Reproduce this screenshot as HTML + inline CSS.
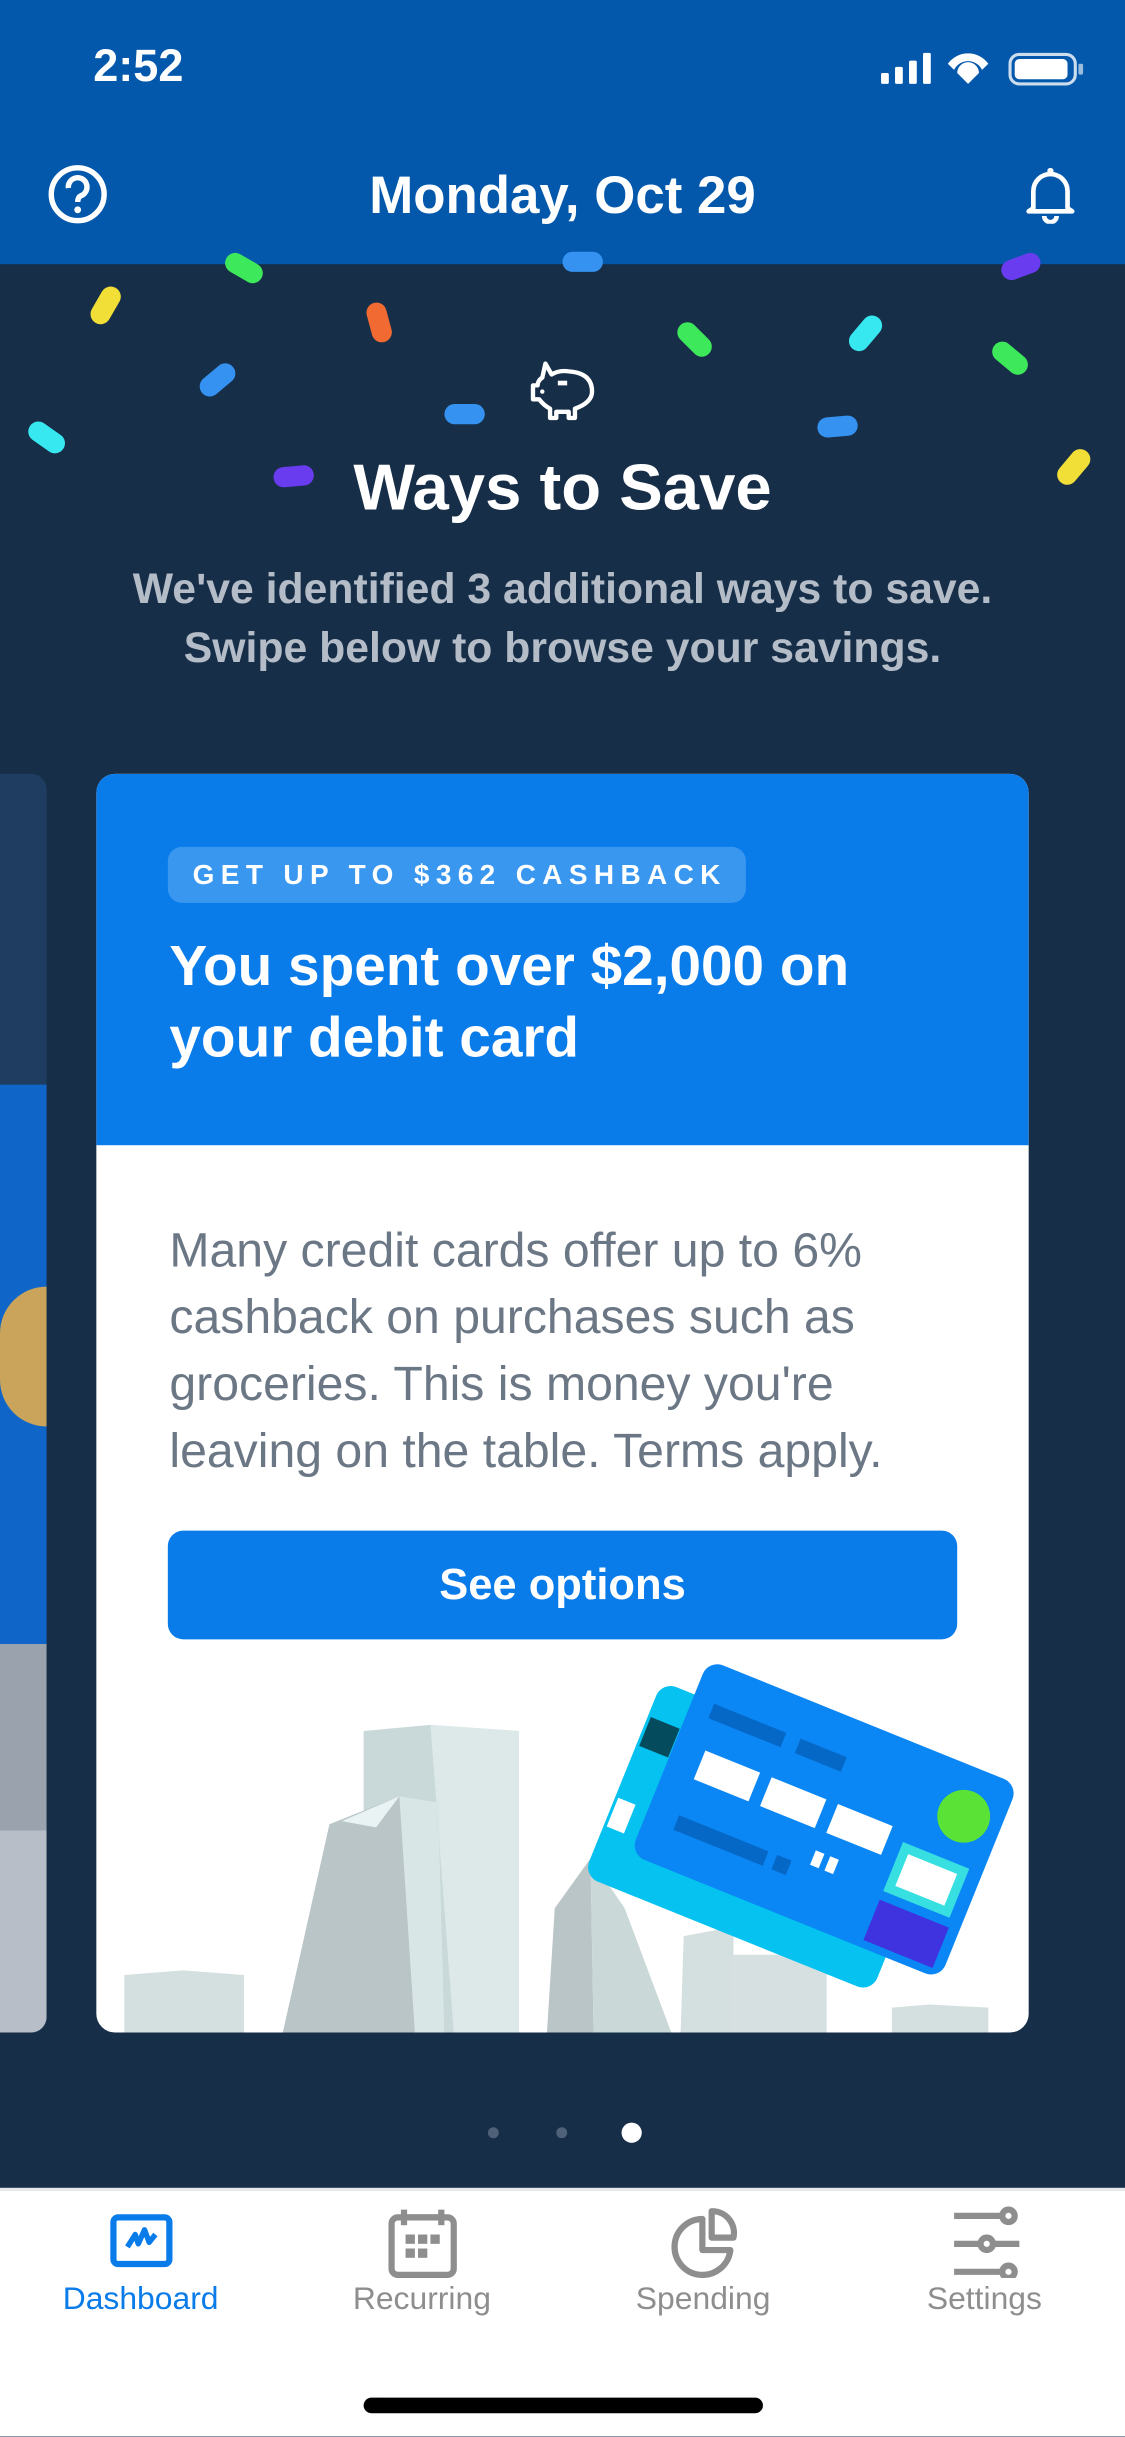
<!DOCTYPE html>
<html><head><meta charset="utf-8"><style>
*{margin:0;padding:0;box-sizing:border-box}
html,body{width:1125px;height:2436px;overflow:hidden;background:#172e48}
#w{position:absolute;left:0;top:0;width:724px;height:1568px;transform:scale(1.5539);transform-origin:0 0;font-family:"Liberation Sans",Arial,sans-serif;background:#172e48;overflow:hidden}
.a{position:absolute}
.c{position:absolute;width:26px;height:13px;border-radius:7px}
</style></head><body><div id="w">
<div class="a" style="left:0;top:0;width:724px;height:170px;background:#0458ab"></div>
<div class="a" style="left:60px;top:27px;color:#fff;font-size:29px;font-weight:bold">2:52</div>
<svg class="a" style="left:566px;top:32px" width="132" height="26" viewBox="0 0 132 26">
<rect x="1" y="15" width="5" height="7" rx="1" fill="#fff"/><rect x="10" y="11" width="5" height="11" rx="1" fill="#fff"/><rect x="19" y="7" width="5" height="15" rx="1" fill="#fff"/><rect x="28" y="2" width="5" height="20" rx="1" fill="#fff"/>
<path d="M44 9 A16 16 0 0 1 70 9 L66 13 A10 10 0 0 0 48 13Z M50 15 A7 7 0 0 1 64 15 L57 22Z" fill="#fff"/>
<rect x="84" y="3" width="42" height="19" rx="6" fill="none" stroke="#fff" stroke-width="2" opacity=".8"/><rect x="87" y="6" width="34" height="13" rx="3" fill="#fff"/><rect x="128" y="9" width="3" height="7" rx="1" fill="#fff" opacity=".6"/>
</svg>
<svg class="a" style="left:30px;top:105px" width="40" height="40" viewBox="0 0 40 40"><circle cx="20" cy="20" r="17" fill="none" stroke="#fff" stroke-width="3.5"/><path d="M14 16 A6 6 0 1 1 22 21 Q20 22 20 25" fill="none" stroke="#fff" stroke-width="3.5"/><circle cx="20" cy="30" r="2.2" fill="#fff"/></svg>
<div class="a" style="left:0;width:724px;top:107px;text-align:center;color:#fff;font-size:34px;font-weight:bold">Monday, Oct 29</div>
<svg class="a" style="left:656px;top:104px" width="40" height="40" viewBox="0 0 40 40"><path d="M9 30 L9 19 A11 11 0 0 1 31 19 L31 30 L34 32 L6 32Z" fill="none" stroke="#fff" stroke-width="3" stroke-linejoin="round"/><path d="M16 35 A4 4 0 0 0 24 35" fill="none" stroke="#fff" stroke-width="3"/><circle cx="20" cy="6" r="2" fill="#fff"/></svg>
<div class="c" style="left:144px;top:166px;background:#3de85a;transform:rotate(30deg)"></div>
<div class="c" style="left:362px;top:162px;background:#3592f0"></div>
<div class="c" style="left:644px;top:165px;background:#6a3cf0;transform:rotate(-20deg)"></div>
<div class="c" style="left:55px;top:190px;background:#f1de36;transform:rotate(-60deg)"></div>
<div class="c" style="left:231px;top:201px;background:#f06a32;transform:rotate(75deg)"></div>
<div class="c" style="left:127px;top:238px;background:#3592f0;transform:rotate(-40deg)"></div>
<div class="c" style="left:434px;top:212px;background:#3de85a;transform:rotate(45deg)"></div>
<div class="c" style="left:544px;top:208px;background:#38e8f0;transform:rotate(-50deg)"></div>
<div class="c" style="left:637px;top:224px;background:#3de85a;transform:rotate(40deg)"></div>
<div class="c" style="left:17px;top:275px;background:#38e8f0;transform:rotate(35deg)"></div>
<div class="c" style="left:286px;top:260px;background:#3592f0"></div>
<div class="c" style="left:526px;top:268px;background:#3592f0;transform:rotate(-5deg)"></div>
<div class="c" style="left:176px;top:300px;background:#6a3cf0;transform:rotate(-5deg)"></div>
<div class="c" style="left:678px;top:294px;background:#f1de36;transform:rotate(-50deg)"></div>
<svg class="a" style="left:336px;top:228px" width="52" height="44" viewBox="0 0 52 44"><g fill="none" stroke="#fff" stroke-width="2.8" stroke-linejoin="round"><path d="M7 20 L7 29 L11 29 Q14 33 18 35 L18 41 L22 41 L22 37 L30 37 L30 41 L34 41 L34 35 Q45 31 45 24 Q45 12 30 11 Q24 10 19 13 L15 6 L13 15 Q10 17 10 20Z"/></g><rect x="23" y="17" width="6" height="3" fill="#fff"/><circle cx="13" cy="24" r="1.4" fill="#fff"/></svg>
<div class="a" style="left:0;width:724px;top:290px;text-align:center;color:#fff;font-size:42px;font-weight:bold">Ways to Save</div>
<div class="a" style="left:0;width:724px;top:360px;text-align:center;color:#b3bcc7;font-size:27.5px;font-weight:bold;line-height:38px">We've identified 3 additional ways to save.<br>Swipe below to browse your savings.</div>
<div class="a" style="left:-20px;top:498px;width:50px;height:810px;border-radius:10px;overflow:hidden;background:#1e3d60">
<div class="a" style="left:0;top:200px;width:50px;height:480px;background:#0f66c8"></div>
<div class="a" style="left:20px;top:330px;width:30px;height:90px;background:#c9a45a;border-radius:30px 0 0 30px"></div>
<div class="a" style="left:0;top:560px;width:50px;height:120px;background:#9aa3ad"></div>
<div class="a" style="left:0;top:680px;width:50px;height:130px;background:#b8bec7"></div>
</div>
<div class="a" style="left:62px;top:498px;width:600px;height:810px;border-radius:12px;overflow:hidden;background:#fff">
<div class="a" style="left:0;top:0;width:600px;height:239px;background:#0a7cea"></div>
<div class="a" style="left:46px;top:47px;width:372px;height:36px;border-radius:9px;background:#3a97f0;color:#fff;font-size:18px;font-weight:bold;letter-spacing:4.1px;line-height:36px;padding-left:16px;white-space:nowrap">GET UP TO $362 CASHBACK</div>
<div class="a" style="left:47px;top:101px;color:#fff;font-size:36.5px;font-weight:bold;line-height:46px;white-space:nowrap">You spent over $2,000 on<br>your debit card</div>
<div class="a" style="left:47px;top:285px;color:#6b7785;font-size:31px;line-height:43px;white-space:nowrap">Many credit cards offer up to 6%<br>cashback on purchases such as<br>groceries. This is money you're<br>leaving on the table. Terms apply.</div>
<div class="a" style="left:46px;top:487px;width:508px;height:70px;border-radius:10px;background:#0a7cea;color:#fff;font-size:28px;font-weight:bold;text-align:center;line-height:70px">See options</div>
<svg class="a" style="left:0;top:570px" width="600" height="240" viewBox="0 0 600 240">
<path d="M18 203 L56 200 L95 203 L95 240 L18 240Z" fill="#d3e0df"/>
<path d="M172 46 L215 42 L272 46 L272 240 L172 240Z" fill="#c9d8d8"/><path d="M215 42 L272 46 L272 240 L230 240Z" fill="#dde9e9"/>
<path d="M150 106 L195 88 L220 92 L224 240 L120 240Z" fill="#bac5c8"/><path d="M158 104 L195 88 L180 108Z" fill="#eaf3f3"/><path d="M195 88 L220 92 L224 240 L205 240Z" fill="#d9e6e6"/>
<path d="M295 160 L318 128 L320 240 L290 240Z" fill="#bac5c8"/><path d="M318 128 L340 160 L370 240 L320 240Z" fill="#cad8d8"/>
<path d="M378 178 L410 172 L410 240 L376 240Z" fill="#d3e0df"/><path d="M408 190 L470 190 L470 240 L408 240Z" fill="#d6e0e1"/>
<path d="M512 224 L536 222 L574 224 L574 240 L512 240Z" fill="#d3e0df"/>
<g transform="translate(364 14) rotate(22)"><rect x="0" y="0" width="200" height="135" rx="10" fill="#05c2f0"/><rect x="2" y="24" width="20" height="20" fill="#054b5e"/><rect x="2" y="80" width="12" height="20" fill="#fff"/></g>
<g transform="translate(394 0) rotate(22)"><rect x="0" y="0" width="215" height="135" rx="10" fill="#0a86f5"/>
<rect x="14" y="25" width="50" height="10" fill="#0668c6"/><rect x="74" y="25" width="32" height="10" fill="#0668c6"/>
<rect x="20" y="55" width="38" height="20" fill="#fff"/><rect x="66" y="55" width="38" height="20" fill="#fff"/><rect x="112" y="55" width="38" height="20" fill="#fff"/>
<circle cx="190" cy="32" r="17" fill="#5ae236"/><rect x="160" y="62" width="46" height="34" fill="#38dfe0"/><rect x="166" y="68" width="34" height="22" fill="#fff"/>
<rect x="20" y="100" width="62" height="10" fill="#0668c6"/><rect x="88" y="100" width="10" height="10" fill="#0668c6"/><rect x="110" y="88" width="6" height="10" fill="#fff"/><rect x="120" y="88" width="6" height="10" fill="#fff"/>
<rect x="160" y="102" width="48" height="28" fill="#3f33e0"/></g>
</svg>
</div>
<div class="a" style="left:314px;top:1369px;width:7px;height:7px;border-radius:50%;background:#4e6178"></div>
<div class="a" style="left:358px;top:1369px;width:7px;height:7px;border-radius:50%;background:#4e6178"></div>
<div class="a" style="left:400px;top:1366px;width:13px;height:13px;border-radius:50%;background:#fff"></div>
<div class="a" style="left:0;top:1408px;width:724px;height:160px;background:#fff;border-top:2px solid #e6e8eb"></div>
<svg class="a" style="left:70px;top:1424px" width="42" height="36" viewBox="0 0 42 36"><rect x="3" y="3" width="36" height="30" rx="3" fill="none" stroke="#0a7cea" stroke-width="4"/><path d="M12 22 L17 14 L19 20 L23 11 L26 19 L30 14" fill="none" stroke="#0a7cea" stroke-width="3.5" stroke-linejoin="round"/></svg>
<svg class="a" style="left:249px;top:1420px" width="46" height="46" viewBox="0 0 46 46"><rect x="3" y="7" width="40" height="37" rx="4" fill="none" stroke="#8e8e8e" stroke-width="4"/><rect x="9" y="2" width="4" height="10" fill="#8e8e8e"/><rect x="33" y="2" width="4" height="10" fill="#8e8e8e"/><rect x="9" y="5" width="28" height="4" fill="#8e8e8e"/><g fill="#8e8e8e"><rect x="12" y="18" width="6" height="6"/><rect x="20" y="18" width="6" height="6"/><rect x="28" y="18" width="6" height="6"/><rect x="12" y="27" width="6" height="6"/><rect x="20" y="27" width="6" height="6"/></g></svg>
<svg class="a" style="left:432px;top:1420px" width="44" height="46" viewBox="0 0 44 46"><path d="M20 8 A18 18 0 1 0 38 28 L20 28Z" fill="none" stroke="#8e8e8e" stroke-width="4" stroke-linejoin="round"/><path d="M26 3 A14 14 0 0 1 40 20 L26 20Z" fill="none" stroke="#8e8e8e" stroke-width="4" stroke-linejoin="round"/></svg>
<svg class="a" style="left:612px;top:1420px" width="46" height="46" viewBox="0 0 46 46"><g stroke="#8e8e8e" stroke-width="4" fill="none"><path d="M2 6 H32 M2 24 H18 M28 24 H44 M2 42 H32"/><circle cx="37" cy="6" r="4"/><circle cx="23" cy="24" r="4"/><circle cx="37" cy="42" r="4"/></g></svg>
<div class="a" style="left:0;width:181px;top:1468px;text-align:center;color:#0a7cea;font-size:20.5px">Dashboard</div>
<div class="a" style="left:181px;width:181px;top:1468px;text-align:center;color:#8e8e8e;font-size:20.5px">Recurring</div>
<div class="a" style="left:362px;width:181px;top:1468px;text-align:center;color:#8e8e8e;font-size:20.5px">Spending</div>
<div class="a" style="left:543px;width:181px;top:1468px;text-align:center;color:#8e8e8e;font-size:20.5px">Settings</div>
<div class="a" style="left:234px;top:1543px;width:257px;height:10px;border-radius:5px;background:#000"></div>
</div></body></html>
